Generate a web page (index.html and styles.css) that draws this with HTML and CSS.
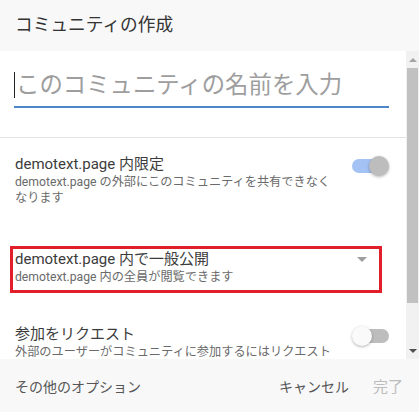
FILE: index.html
```html
<!DOCTYPE html>
<html lang="ja">
<head>
<meta charset="UTF-8" />
<title>コミュニティの作成</title>
<link rel="stylesheet" href="styles.css">
</head>
<body>
<div class="dialog">
	<div class="header">コミュニティの作成</div>

	<div class="main">
		<div class="content">
			<div class="name">
				<div class="name-input"><span class="caret"></span>このコミュニティの名前を入力</div>
			</div>

			<div class="divider"></div>

			<div class="option option-first">
				<div class="option-text">
					<div class="option-title">demotext.page 内限定</div>
					<div class="option-desc">demotext.page の外部にこのコミュニティを共有できなくなります</div>
				</div>
				<div class="toggle toggle-on"><span class="track"></span><span class="knob"></span></div>
			</div>

			<div class="option option-select">
				<div class="select-box">
					<div class="option-text">
						<div class="option-title">demotext.page 内で一般公開</div>
						<div class="option-desc">demotext.page 内の全員が閲覧できます</div>
					</div>
					<span class="arrow"></span>
				</div>
			</div>

			<div class="option option-last">
				<div class="option-text">
					<div class="option-title">参加をリクエスト</div>
					<div class="option-desc">外部のユーザーがコミュニティに参加するにはリクエストが必要です</div>
				</div>
				<div class="toggle toggle-off"><span class="track"></span><span class="knob"></span></div>
			</div>
		</div>

		<div class="scrollbar">
			<div class="sb-button"><span class="sb-up"></span></div>
			<div class="sb-thumb"></div>
			<div class="sb-rest"></div>
			<div class="sb-button"><span class="sb-down"></span></div>
		</div>
	</div>

	<div class="footer">
		<span class="more">その他のオプション</span>
		<span class="cancel">キャンセル</span>
		<span class="done">完了</span>
	</div>
</div>
</body>
</html>
```

FILE: styles.css
```css
* {
	margin: 0;
	padding: 0;
	box-sizing: border-box;
}

body {
	width: 419px;
	height: 412px;
	overflow: hidden;
	font-family: Roboto, "Noto Sans CJK JP", sans-serif;
	color: #3c3c3c;
	background: #fff;
}

.dialog {
	display: flex;
	flex-direction: column;
	height: 412px;
}

.header {
	height: 51px;
	padding-left: 15px;
	line-height: 51px;
	font-size: 17.7px;
	color: #333;
	background-color: #f8f8f8;
}

.main {
	display: flex;
	height: 308px;
}

.content {
	flex: 1;
	overflow: hidden;
	background: #fff;
}

.name {
	padding: 21px 17px 0 14px;
}

.name-input {
	display: flex;
	align-items: center;
	height: 36px;
	padding-bottom: 8px;
	border-bottom: 2px solid #4a86c8;
	font-size: 23.4px;
	line-height: 26px;
	color: #9e9e9e;
	white-space: nowrap;
}

.caret {
	width: 1px;
	height: 26px;
	margin-right: 1px;
	background: #222;
}

.divider {
	height: 1px;
	margin-top: 29px;
	background: #e3e3e3;
}

.option {
	display: flex;
	align-items: flex-start;
	justify-content: space-between;
	padding: 0 17px 0 15px;
}

.option-first {
	margin-top: 16px;
}

.option-select {
	margin-top: 40px;
	padding-left: 10px;
	padding-right: 24px;
}

.option-last {
	margin-top: 31px;
}

.option-text {
	max-width: 322px;
}

.option-first .option-text,
.option-last .option-text {
	max-width: 322px;
}

.option-title {
	font-size: 15px;
	line-height: 20px;
	color: #3c3c3c;
	white-space: nowrap;
}

.option-desc {
	font-size: 12.2px;
	line-height: 16px;
	color: #6a6a6a;
}

.select-box {
	display: flex;
	justify-content: space-between;
	width: 100%;
	height: 47px;
	padding: 0 12px 0 2px;
	border: 3px solid #e01f2b;
}

.arrow {
	width: 0;
	height: 0;
	margin-top: 8px;
	border-left: 5px solid transparent;
	border-right: 5px solid transparent;
	border-top: 5px solid #9e9e9e;
}

.toggle {
	position: relative;
	flex: none;
	width: 37px;
	height: 20px;
	margin-top: 2px;
}

.track {
	position: absolute;
	top: 3px;
	width: 33px;
	height: 14px;
	border-radius: 7px;
}

.knob {
	position: absolute;
	top: 0;
	width: 20px;
	height: 20px;
	border-radius: 50%;
	box-shadow: 0 1px 3px rgba(0, 0, 0, .3);
}

.toggle-on .track {
	left: 0;
	background: #a4c2f4;
}

.toggle-on .knob {
	right: 0;
	background: #bdbdbd;
}

.toggle-off .track {
	right: 0;
	background: #bdbdbd;
}

.toggle-off .knob {
	left: 0;
	background: #fafafa;
}

.scrollbar {
	display: flex;
	flex-direction: column;
	width: 13px;
	background: #f1f1f1;
}

.sb-button {
	display: flex;
	align-items: center;
	justify-content: center;
	height: 17px;
}

.sb-up {
	border-left: 4px solid transparent;
	border-right: 4px solid transparent;
	border-bottom: 4px solid #a3a3a3;
}

.sb-down {
	border-left: 4px solid transparent;
	border-right: 4px solid transparent;
	border-top: 4px solid #505050;
}

.sb-thumb {
	height: 235px;
	margin: 0 1px;
	background: #c1c1c1;
}

.sb-rest {
	flex: 1;
}

.footer {
	display: flex;
	align-items: center;
	height: 53px;
	padding: 0 16px 0 15px;
	font-size: 14px;
	background-color: #f8f8f8;
}

.more {
	flex: 1;
	color: #555;
}

.cancel {
	color: #555;
}

.done {
	margin-left: 24px;
	font-size: 15px;
	color: #bdbdbd;
}
```
